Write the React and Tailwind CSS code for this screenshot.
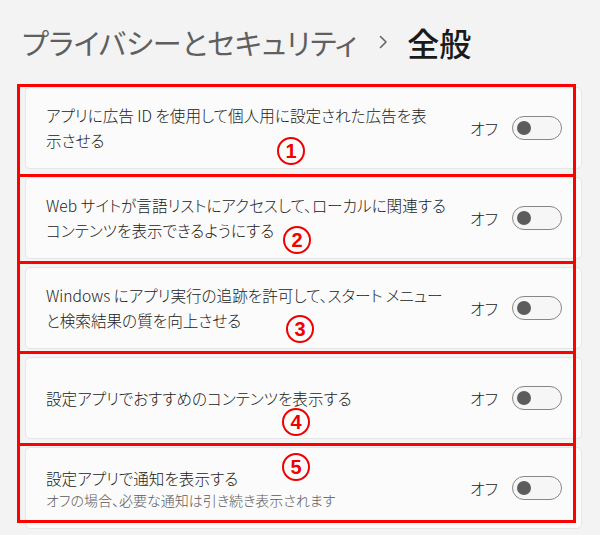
import React from 'react';

const rows = [
  { lines: ['アプリに広告 ID を使用して個人用に設定された広告を表', '示させる'] },
  { lines: ['Web サイトが言語リストにアクセスして、ローカルに関連する', 'コンテンツを表示できるようにする'] },
  { lines: ['Windows にアプリ実行の追跡を許可して、スタート メニュー', 'と検索結果の質を向上させる'] },
  { lines: ['設定アプリでおすすめのコンテンツを表示する'] },
  { lines: ['設定アプリで通知を表示する'], sub: 'オフの場合、必要な通知は引き続き表示されます' },
];

// red annotation frames (top, height)
const frames = [
  [84, 93],
  [174, 90],
  [261, 93],
  [351, 95],
  [443, 80],
];

// circled numbers (center x, center y)
const marks = [
  ['1', 291, 151],
  ['2', 297, 240],
  ['3', 300, 329],
  ['4', 296, 422],
  ['5', 296, 467],
];

function Toggle() {
  return (
    <div className="w-[50px] h-[24px] rounded-full border border-[#878787] bg-[#f6f6f6] flex items-center pl-[4px]">
      <div className="w-[14px] h-[14px] rounded-full bg-[#5c5c5c]"></div>
    </div>
  );
}

function Row({ lines, sub }) {
  return (
    <div className="h-[82px] rounded-[5px] border border-[#e6e6e6] bg-[#fbfbfb] flex items-center pl-[20px] pr-[19px]">
      <div className="flex-1 min-w-0">
        {lines.map((l, i) => (
          <div key={i} className="text-[15.6px] leading-[25px] font-light text-[#222] whitespace-nowrap">
            {l}
          </div>
        ))}
        {sub && (
          <div className="text-[14px] leading-[19px] font-light text-[#5a5a5a] whitespace-nowrap">{sub}</div>
        )}
      </div>
      <div className="flex items-center gap-[14px]">
        <span className="text-[16px] font-light text-[#222]">オフ</span>
        <Toggle />
      </div>
    </div>
  );
}

export default function App() {
  return (
    <div
      className="w-[600px] h-[535px] bg-[#f3f3f3] relative overflow-hidden [font-feature-settings:'palt']"
      style={{ fontFamily: '"Noto Sans CJK JP", "Noto Sans", sans-serif' }}
    >
      {/* パンくず */}
      <div className="h-[87px] flex items-center pl-[22px] pb-[4px]">
        <span className="text-[29px] leading-[40px] text-[#5f5f5f]">プライバシーとセキュリティ</span>
        <svg className="ml-[22px] mr-[19px]" width="9" height="14" viewBox="0 0 9 14" fill="none">
          <path d="M1.5 1.5L7 7l-5.5 5.5" stroke="#666" strokeWidth="1.6" strokeLinecap="round" strokeLinejoin="round" />
        </svg>
        <span className="text-[32px] leading-[40px] text-[#1a1a1a] font-medium">全般</span>
      </div>

      {/* 設定カード */}
      <div className="ml-[25px] w-[557px] flex flex-col gap-[8px]">
        {rows.map((r, i) => (
          <Row key={i} {...r} />
        ))}
      </div>

      {/* 注釈 */}
      {frames.map(([top, h], i) => (
        <div
          key={i}
          className="absolute left-[17px] w-[559px] border-[3px] border-[#ff0000] pointer-events-none"
          style={{ top, height: h }}
        ></div>
      ))}
      {marks.map(([n, x, y]) => (
        <div
          key={n}
          className="absolute w-[28px] h-[28px] rounded-full border-[2.5px] border-[#f00000] flex items-center justify-center text-[#f00000] font-bold text-[20px] leading-none"
          style={{ left: x - 14, top: y - 14, fontFamily: '"Liberation Sans", Arial, sans-serif' }}
        >
          {n}
        </div>
      ))}
    </div>
  );
}
